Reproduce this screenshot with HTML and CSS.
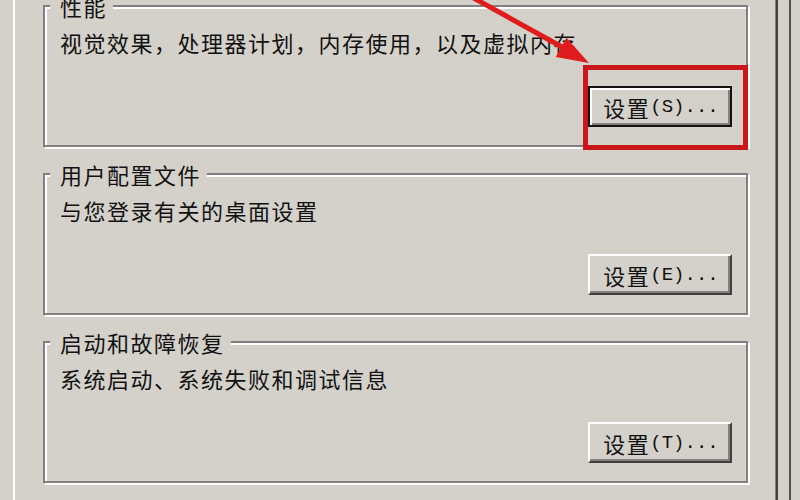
FILE: index.html
```html
<!DOCTYPE html>
<html lang="zh-CN">
<head>
    <meta charset="UTF-8">
    <title>系统属性 - 高级</title>
    <link rel="stylesheet" href="styles.css">
</head>
<body>

    <div class="dialog">
        <div class="tab">

            <!-- 性能 -->
            <fieldset class="group">
                <legend>性能</legend>
                <p class="desc">视觉效果，处理器计划，内存使用，以及虚拟内存</p>
                <div class="actions">
                    <button class="btn btn-default">设置<span class="key">(S)...</span></button>
                </div>
            </fieldset>

            <!-- 用户配置文件 -->
            <fieldset class="group">
                <legend>用户配置文件</legend>
                <p class="desc">与您登录有关的桌面设置</p>
                <div class="actions">
                    <button class="btn">设置<span class="key">(E)...</span></button>
                </div>
            </fieldset>

            <!-- 启动和故障恢复 -->
            <fieldset class="group">
                <legend>启动和故障恢复</legend>
                <p class="desc">系统启动、系统失败和调试信息</p>
                <div class="actions">
                    <button class="btn">设置<span class="key">(T)...</span></button>
                </div>
            </fieldset>

        </div>

        <!-- red marks drawn over the screenshot -->
        <svg class="annotation" width="800" height="500" viewBox="0 0 800 500">
            <line x1="470" y1="-4" x2="562" y2="47" stroke="#e01c1c" stroke-width="5"/>
            <polygon points="589,63 555.7,56.9 566.5,37.7" fill="#e01c1c"/>
            <rect x="585.5" y="67.5" width="160" height="80" fill="none" stroke="#c8161b" stroke-width="5"/>
        </svg>
    </div>

</body>
</html>
```

FILE: styles.css
```css
body {
    margin: 0;
    background-color: #d4d1ca;
    font-family: "Noto Sans CJK SC", "Noto Sans", sans-serif;
    font-size: 22px;
    color: #111;
    overflow: hidden;
}

.dialog {
    position: relative;
    width: 765px;
    padding: 0 11px 0 13px;
    border-right: 2px solid #505050;
    display: flow-root;
}

.tab {
    display: flow-root;
    min-height: 520px;
    padding: 0 28px;
    border-left: 2px solid #fff;
    border-right: 2px solid #404040;
    box-shadow: inset -1px 0 0 #808080;
}

.group {
    margin: 15px 0 0;
    padding: 12px 14px 18px 15px;
    border: 2px solid #808080;
    box-shadow: inset 2px 2px 0 #fff, 2px 2px 0 #fff;
    min-width: 0;
}

.group:first-child {
    margin-top: -6px;
}

.group legend {
    margin-left: -10px;
    padding: 0 6px 0 10px;
    line-height: 24px;
    letter-spacing: 1.5px;
    background-color: #d4d1ca;
}

.desc {
    margin: 0;
    line-height: 24px;
    letter-spacing: 1.5px;
}

.actions {
    display: flex;
    justify-content: flex-end;
    margin-top: 32px;
}

.btn {
    display: flex;
    align-items: center;
    justify-content: center;
    width: 144px;
    height: 41px;
    padding: 0 0 0 2px;
    font-family: inherit;
    font-size: 22px;
    letter-spacing: 1.5px;
    color: #111;
    background-color: #d4d1ca;
    border: 2px solid;
    border-color: #fff #404040 #404040 #fff;
    box-shadow: inset -2px -2px 0 #808080;
}

.btn-default {
    border-color: #111;
    box-shadow: inset 2px 2px 0 #fff, inset -2px -2px 0 #808080;
}

.key {
    font-family: "Liberation Mono", monospace;
    font-size: 19px;
    letter-spacing: 0;
}

.annotation {
    position: absolute;
    left: 0;
    top: 0;
    pointer-events: none;
}
```
